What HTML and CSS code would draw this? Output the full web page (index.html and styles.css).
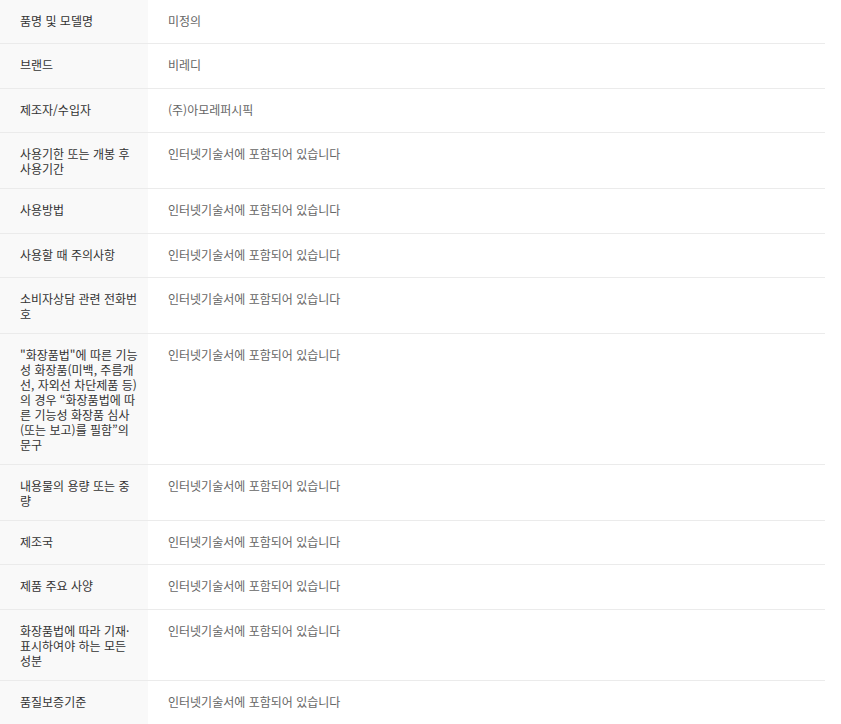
FILE: index.html
```html
<!DOCTYPE html>
<html lang="ko">
<head>
    <meta charset="utf-8">
    <title>상품정보 제공고시</title>
    <link rel="stylesheet" href="styles.css">
</head>
<body>
    <table class="info-table">
        <tbody>
            <tr>
                <th>품명 및 모델명</th>
                <td>미정의</td>
            </tr>
            <tr>
                <th>브랜드</th>
                <td>비레디</td>
            </tr>
            <tr>
                <th>제조자/수입자</th>
                <td>(주)아모레퍼시픽</td>
            </tr>
            <tr>
                <th>사용기한 또는 개봉 후 사용기간</th>
                <td>인터넷기술서에 포함되어 있습니다</td>
            </tr>
            <tr>
                <th>사용방법</th>
                <td>인터넷기술서에 포함되어 있습니다</td>
            </tr>
            <tr>
                <th>사용할 때 주의사항</th>
                <td>인터넷기술서에 포함되어 있습니다</td>
            </tr>
            <tr>
                <th>소비자상담 관련 전화번호</th>
                <td>인터넷기술서에 포함되어 있습니다</td>
            </tr>
            <tr>
                <th>"화장품법"에 따른 기능성 화장품(미백, 주름개선, 자외선 차단제품 등)의 경우 “화장품법에 따른 기능성 화장품 심사(또는 보고)를 필함”의 문구</th>
                <td>인터넷기술서에 포함되어 있습니다</td>
            </tr>
            <tr>
                <th>내용물의 용량 또는 중량</th>
                <td>인터넷기술서에 포함되어 있습니다</td>
            </tr>
            <tr>
                <th>제조국</th>
                <td>인터넷기술서에 포함되어 있습니다</td>
            </tr>
            <tr>
                <th>제품 주요 사양</th>
                <td>인터넷기술서에 포함되어 있습니다</td>
            </tr>
            <tr>
                <th>화장품법에 따라 기재·표시하여야 하는 모든 성분</th>
                <td>인터넷기술서에 포함되어 있습니다</td>
            </tr>
            <tr>
                <th>품질보증기준</th>
                <td>인터넷기술서에 포함되어 있습니다</td>
            </tr>
        </tbody>
    </table>
</body>
</html>
```

FILE: styles.css
```css
body {
    margin: 0;
    background: #fff;
    font-family: "Noto Sans CJK KR", "Noto Sans", sans-serif;
}

.info-table {
    width: 825px;
    border-collapse: collapse;
    table-layout: fixed;
    font-size: 12px;
    line-height: 15px;
}

.info-table tr {
    border-bottom: 1px solid #ebebeb;
}

.info-table tr:last-child {
    border-bottom: none;
}

.info-table th {
    width: 148px;
    box-sizing: border-box;
    padding: 13px 8px 12px 20px;
    background-color: #f9f9f9;
    color: #333;
    font-weight: normal;
    text-align: left;
    vertical-align: top;
    word-break: break-all;
}

.info-table td {
    padding: 13px 20px 15.4px;
    color: #666;
    vertical-align: top;
}
```
